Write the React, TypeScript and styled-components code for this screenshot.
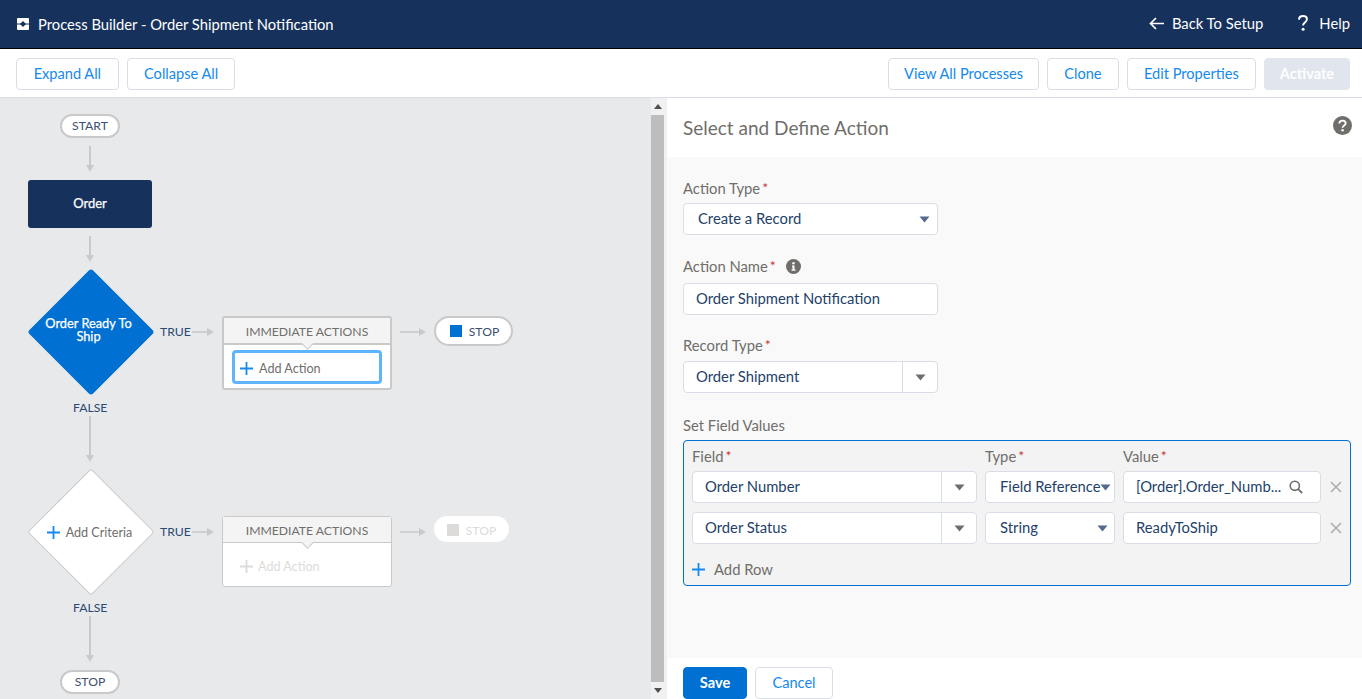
import { ReactNode } from 'react';
import styled, { createGlobalStyle } from 'styled-components';

const FONT = '"Lato", "Open Sans", sans-serif';
const NAVY = '#16325c';
const INK = '#243f69';
const BLUE = '#0070d2';
const LINK = '#1589ee';
const BORDER = '#d8dde6';
const CONNECTOR = '#c9c9c9';

const GlobalStyle = createGlobalStyle`
  html, body {
    margin: 0;
    padding: 0;
    height: 100%;
    overflow: hidden;
    font-family: ${FONT};
    color: ${NAVY};
  }
  * {
    box-sizing: border-box;
  }
`;

const Page = styled.div`
  width: 1362px;
  height: 699px;
  display: flex;
  flex-flow: column;
  overflow: hidden;
`;

const Header = styled.header`
  flex: 0 0 49px;
  display: flex;
  align-items: center;
  justify-content: space-between;
  padding: 0 12px 0 17px;
  background: ${NAVY};
  border-bottom: 1px solid #000;
  color: #fff;
`;

const HeaderGroup = styled.div`
  display: flex;
  align-items: center;
`;

const HeaderTitle = styled.span`
  margin-left: 9px;
  font-size: 14.75px;
`;

const HeaderLink = styled.span<{ $gap: number }>`
  display: flex;
  align-items: center;
  gap: ${(p) => p.$gap}px;
  margin-left: 35px;
  padding-bottom: 2px;
  font-size: 14.8px;
`;

const Toolbar = styled.div`
  flex: 0 0 49px;
  display: flex;
  justify-content: space-between;
  padding: 9px 12px 0 16px;
  background: #fff;
  border-bottom: 1px solid ${BORDER};
`;

const ButtonGroup = styled.div`
  display: flex;
  gap: 8.3px;
`;

const Button = styled.button<{ $width: number; $variant?: 'brand' | 'disabled' }>`
  width: ${(p) => p.$width}px;
  height: 32px;
  padding: 0 0 2px;
  border-radius: 4px;
  font-family: ${FONT};
  font-size: 14.6px;
  border: 1px solid
    ${(p) =>
      p.$variant === 'brand' ? BLUE : p.$variant === 'disabled' ? '#e0e5ee' : BORDER};
  background: ${(p) =>
    p.$variant === 'brand' ? BLUE : p.$variant === 'disabled' ? '#e0e5ee' : '#fff'};
  color: ${(p) => (p.$variant ? '#fff' : LINK)};
  font-weight: ${(p) => (p.$variant ? 700 : 400)};
`;

const Workspace = styled.div`
  flex: 1;
  min-height: 0;
  display: flex;
`;

const Canvas = styled.div`
  position: relative;
  flex: 0 0 651px;
  background: #e8e9eb;
`;

const ScrollTrack = styled.div`
  flex: 0 0 16px;
  display: flex;
  flex-flow: column;
  align-items: stretch;
  background: #f1f1f1;
  padding-right: 3px;
`;

const ScrollArrow = styled.div`
  flex: 0 0 17px;
  display: flex;
  align-items: center;
  justify-content: center;
  color: #505050;
`;

const ScrollThumb = styled.div`
  flex: 1;
  background: #bdbdbd;
`;

const Panel = styled.section`
  flex: 1;
  display: flex;
  flex-flow: column;
  min-width: 0;
`;

const PanelHead = styled.div`
  flex: 0 0 59px;
  display: flex;
  align-items: center;
  justify-content: space-between;
  padding: 0 10px 0 16px;
  background: #fff;
`;

const PanelTitle = styled.h2`
  margin: 0 0 1px;
  font-size: 19px;
  font-weight: 400;
  color: #706e6b;
`;

const HelpSpot = styled.span`
  display: flex;
  margin-bottom: 5px;
`;

const PanelBody = styled.div`
  flex: 1;
  min-height: 0;
  display: flex;
  flex-flow: column;
  padding: 22px 11px 0 16px;
  background: #f9f9f9;
`;

const PanelFooter = styled.div`
  flex: 0 0 41px;
  display: flex;
  gap: 8px;
  padding: 9px 0 0 16px;
  background: #fff;
`;

const FormField = styled.div<{ $gap?: number }>`
  display: flex;
  flex-flow: column;
  margin-bottom: ${(p) => p.$gap ?? 0}px;
`;

const Label = styled.label<{ $below?: number }>`
  display: flex;
  align-items: center;
  height: 18px;
  margin-bottom: ${(p) => p.$below ?? 0}px;
  font-size: 14.8px;
  color: #706e6b;
`;

const Required = styled.span`
  color: #c23934;
  margin-left: 2px;
  font-size: 14px;
  line-height: 18px;
`;

const InfoDot = styled.span`
  display: flex;
  margin-left: 10px;
`;

const Control = styled.div<{ $width?: number }>`
  width: ${(p) => (p.$width ? `${p.$width}px` : 'auto')};
  height: 32px;
  display: flex;
  align-items: center;
  background: #fff;
  border: 1px solid ${BORDER};
  border-radius: 4px;
  font-size: 14.8px;
  color: ${INK};
  white-space: nowrap;
`;

const ControlText = styled.span<{ $indent?: number }>`
  flex: 1;
  min-width: 0;
  padding-left: ${(p) => p.$indent ?? 12}px;
  padding-bottom: 2px;
`;

const ComboArrow = styled.span`
  flex: 0 0 35px;
  height: 100%;
  display: flex;
  align-items: center;
  justify-content: center;
  border-left: 1px solid ${BORDER};
  color: #706e6b;
`;

const SelectArrow = styled.span<{ $right: number }>`
  display: flex;
  margin-right: ${(p) => p.$right}px;
  color: #54698d;
`;

const FieldBox = styled.div`
  height: 146px;
  display: flex;
  flex-flow: column;
  padding: 6px 0 0 8px;
  background: #f3f3f3;
  border: 1px solid ${BLUE};
  border-radius: 4px;
`;

const FieldGrid = styled.div`
  display: grid;
  grid-template-columns: 285px 130px 198px 29px;
  grid-template-rows: 15px 32px 32px;
  column-gap: 8px;
  row-gap: 9px;
  align-items: center;
`;

const GridLabel = styled(Label)`
  align-self: start;
`;

const RemoveButton = styled.span`
  display: flex;
  margin-left: 1px;
  color: #b0adab;
`;

const AddRow = styled.div`
  display: flex;
  align-items: center;
  gap: 9px;
  margin-top: 16px;
  font-size: 14.8px;
  color: #706e6b;
`;

const Pill = styled.div<{ $x: number; $y: number; $w: number; $h: number }>`
  position: absolute;
  left: ${(p) => p.$x}px;
  top: ${(p) => p.$y}px;
  width: ${(p) => p.$w}px;
  height: ${(p) => p.$h}px;
  display: flex;
  align-items: center;
  justify-content: center;
  padding-bottom: 1px;
  background: #fff;
  border: 2px solid ${CONNECTOR};
  border-radius: 16px;
  font-size: 12.2px;
  color: #3c4f6f;
`;

const StopPill = styled(Pill)`
  gap: 7px;
  padding: 0 0 0 2px;
`;

const FadedPill = styled(Pill)`
  border: 0;
  gap: 7px;
  padding: 2px 0 0;
  color: #dddbda;
`;

const StopSquare = styled.span<{ $muted?: boolean }>`
  width: 12px;
  height: 12px;
  background: ${(p) => (p.$muted ? '#dddbda' : BLUE)};
`;

const StartNode = styled.div`
  position: absolute;
  left: 28px;
  top: 82px;
  width: 124px;
  height: 48px;
  display: flex;
  align-items: center;
  justify-content: center;
  padding-bottom: 2px;
  background: ${NAVY};
  border-radius: 3px;
  color: #fff;
  font-size: 13px;
  -webkit-text-stroke: 0.25px #fff;
`;

const Diamond = styled.div<{ $y: number; $active?: boolean }>`
  position: absolute;
  left: 28px;
  top: ${(p) => p.$y}px;
  width: 124px;
  height: 126px;
  display: flex;
  align-items: center;
  justify-content: center;
  &::before {
    content: '';
    position: absolute;
    left: 18px;
    top: 19px;
    width: 88px;
    height: 88px;
    transform: rotate(45deg);
    border-radius: 3px;
    background: ${(p) => (p.$active ? BLUE : '#fff')};
    border: 1px solid ${(p) => (p.$active ? BLUE : CONNECTOR)};
  }
`;

const DiamondText = styled.div`
  position: relative;
  width: 96px;
  margin: -2px 0 0 -3px;
  text-align: center;
  color: #fff;
  font-size: 12.8px;
  line-height: 13px;
  -webkit-text-stroke: 0.25px #fff;
`;

const DiamondAdd = styled.div`
  position: relative;
  display: flex;
  align-items: center;
  gap: 6px;
  margin: 2px 0 0 -1px;
  color: #706e6b;
  font-size: 12.6px;
`;

const BranchLabel = styled.span<{ $x: number; $y: number }>`
  position: absolute;
  left: ${(p) => p.$x}px;
  top: ${(p) => p.$y}px;
  font-size: 12.2px;
  line-height: 14px;
  color: #2a4a75;
`;

const ConnectorArt = styled.svg<{ $x: number; $y: number }>`
  position: absolute;
  left: ${(p) => p.$x}px;
  top: ${(p) => p.$y}px;
  display: block;
`;

const ActionBox = styled.div<{ $y: number; $h: number; $active?: boolean }>`
  position: absolute;
  left: 222px;
  top: ${(p) => p.$y}px;
  width: 170px;
  height: ${(p) => p.$h}px;
  display: flex;
  flex-flow: column;
  background: #fff;
  border: ${(p) => (p.$active ? 2 : 1)}px solid ${CONNECTOR};
  border-radius: 3px;
`;

const ActionHead = styled.div<{ $active?: boolean }>`
  position: relative;
  flex: 0 0 ${(p) => (p.$active ? 27 : 26)}px;
  display: flex;
  align-items: center;
  justify-content: center;
  padding-top: 1px;
  background: #f4f4f4;
  border-bottom: ${(p) => (p.$active ? 2 : 1)}px solid ${CONNECTOR};
  font-size: 12.2px;
  color: #706e6b;
  &::after {
    content: '';
    position: absolute;
    left: 50%;
    bottom: -5px;
    width: 8px;
    height: 8px;
    margin-left: -4px;
    transform: rotate(45deg);
    background: #f4f4f4;
    border-right: 1px solid ${CONNECTOR};
    border-bottom: 1px solid ${CONNECTOR};
  }
`;

const ActionButton = styled.div`
  height: 34px;
  margin: 5px 8px 0;
  display: flex;
  align-items: center;
  gap: 6px;
  padding: 2px 0 0 5px;
  background: #fff;
  border: 3px solid #5eb4ff;
  border-radius: 4px;
  font-size: 12.6px;
  color: #706e6b;
`;

const ActionPlaceholder = styled.div`
  display: flex;
  align-items: center;
  gap: 5px;
  padding: 16px 0 0 17px;
  font-size: 12.6px;
  color: #dddbda;
`;

const Plus = ({ size = 13, color = LINK }: { size?: number; color?: string }) => (
  <svg width={size} height={size} viewBox="0 0 13 13">
    <path d="M6.5 0v13M0 6.5h13" stroke={color} strokeWidth="1.8" fill="none" />
  </svg>
);

const Caret = () => (
  <svg width="11" height="7" viewBox="0 0 11 7">
    <path d="M0.5 0.5h10L5.5 6.5z" fill="currentColor" />
  </svg>
);

const Cross = () => (
  <svg width="12" height="12" viewBox="0 0 12 12">
    <path d="M1 1l10 10M11 1L1 11" stroke="currentColor" strokeWidth="1.6" fill="none" />
  </svg>
);

const DownArrow = ({ x, y, length }: { x: number; y: number; length: number }) => (
  <ConnectorArt $x={x} $y={y} width="12" height={length} viewBox={`0 0 12 ${length}`}>
    <path d={`M6 0V${length - 6}`} stroke={CONNECTOR} strokeWidth="2" />
    <path d={`M2 ${length - 7}h8l-4 7z`} fill={CONNECTOR} />
  </ConnectorArt>
);

const RightArrow = ({ x, y, length }: { x: number; y: number; length: number }) => (
  <ConnectorArt $x={x} $y={y} width={length} height="12" viewBox={`0 0 ${length} 12`}>
    <path d={`M0 6H${length - 6}`} stroke={CONNECTOR} strokeWidth="1.6" />
    <path d={`M${length - 7} 2v8l7-4z`} fill={CONNECTOR} />
  </ConnectorArt>
);

const ProcessLogo = () => (
  <svg width="12" height="12" viewBox="0 0 12 12">
    <rect width="12" height="12" rx="1" fill="#fff" />
    <path d="M0 6h12" stroke={NAVY} strokeWidth="1" />
    <path d="M6 3 9 6 6 9 3 6z" fill={NAVY} />
  </svg>
);

const BackArrow = () => (
  <svg width="15" height="13" viewBox="0 0 15 13">
    <path d="M7 1 1.5 6.5 7 12M2 6.5h13" stroke="#fff" strokeWidth="1.7" fill="none" />
  </svg>
);

const HelpGlyph = () => (
  <svg width="10" height="16" viewBox="0 0 10 16">
    <path
      d="M1 4.600C1.100 2.300 2.700 1.100 5 1.100c2.400 0 3.900 1.300 3.900 3.200 0 1.600-.9 2.400-2 3.200C5.700 8.400 5.100 9 5.100 10.500"
      stroke="#fff"
      strokeWidth="2"
      fill="none"
    />
    <circle cx="5.100" cy="14.300" r="1.500" fill="#fff" />
  </svg>
);

const HelpCircle = () => (
  <svg width="19" height="19" viewBox="0 0 19 19">
    <circle cx="9.500" cy="9.500" r="9.500" fill="#706e6b" />
    <path
      d="M6.300 7.500c.1-1.900 1.400-2.900 3.200-2.900s3.200 1 3.200 2.600c0 2.300-3.100 2.300-3.100 4.500"
      stroke="#fff"
      strokeWidth="1.900"
      fill="none"
    />
    <circle cx="9.600" cy="14.300" r="1.200" fill="#fff" />
  </svg>
);

const InfoCircle = () => (
  <svg width="15" height="15" viewBox="0 0 15 15">
    <circle cx="7.500" cy="7.500" r="7.500" fill="#706e6b" />
    <circle cx="7.500" cy="4.300" r="1.200" fill="#fff" />
    <path d="M6 6.500h2.500v4h1v1.200h-4v-1.200h1v-2.800H6z" fill="#fff" />
  </svg>
);

const SearchGlyph = () => (
  <svg width="14" height="14" viewBox="0 0 14 14">
    <circle cx="5.800" cy="5.800" r="4.600" stroke="#706e6b" strokeWidth="1.600" fill="none" />
    <path d="M9.200 9.200l4 4" stroke="#706e6b" strokeWidth="1.900" />
  </svg>
);

const Field = ({
  label,
  children,
  gap,
  below,
  info,
}: {
  label: string;
  children: ReactNode;
  gap: number;
  below: number;
  info?: boolean;
}) => (
  <FormField $gap={gap}>
    <Label $below={below}>
      {label}
      <Required>*</Required>
      {info && (
        <InfoDot>
          <InfoCircle />
        </InfoDot>
      )}
    </Label>
    {children}
  </FormField>
);

const Combo = ({ value, width }: { value: string; width?: number }) => (
  <Control $width={width}>
    <ControlText>{value}</ControlText>
    <ComboArrow>
      <Caret />
    </ComboArrow>
  </Control>
);

const App = () => (
  <Page>
    <GlobalStyle />
    <Header>
      <HeaderGroup>
        <ProcessLogo />
        <HeaderTitle>Process Builder - Order Shipment Notification</HeaderTitle>
      </HeaderGroup>
      <HeaderGroup>
        <HeaderLink $gap={8}>
          <BackArrow />
          Back To Setup
        </HeaderLink>
        <HeaderLink $gap={11}>
          <HelpGlyph />
          Help
        </HeaderLink>
      </HeaderGroup>
    </Header>
    <Toolbar>
      <ButtonGroup>
        <Button $width={102.7}>Expand All</Button>
        <Button $width={108.3}>Collapse All</Button>
      </ButtonGroup>
      <ButtonGroup>
        <Button $width={150.4}>View All Processes</Button>
        <Button $width={71.7}>Clone</Button>
        <Button $width={128.7}>Edit Properties</Button>
        <Button $width={86} $variant="disabled">
          Activate
        </Button>
      </ButtonGroup>
    </Toolbar>
    <Workspace>
      <Canvas>
        <Pill $x={60} $y={16} $w={60} $h={24}>
          START
        </Pill>
        <DownArrow x={84} y={48} length={26} />
        <StartNode>Order</StartNode>
        <DownArrow x={84} y={138} length={26} />
        <Diamond $y={170} $active>
          <DiamondText>Order Ready To Ship</DiamondText>
        </Diamond>
        <BranchLabel $x={160} $y={227}>
          TRUE
        </BranchLabel>
        <RightArrow x={192} y={228} length={22} />
        <ActionBox $y={218} $h={74} $active>
          <ActionHead $active>IMMEDIATE ACTIONS</ActionHead>
          <ActionButton>
            <Plus />
            Add Action
          </ActionButton>
        </ActionBox>
        <RightArrow x={400} y={228} length={26} />
        <StopPill $x={434} $y={218} $w={79} $h={30}>
          <StopSquare />
          STOP
        </StopPill>
        <BranchLabel $x={73} $y={303}>
          FALSE
        </BranchLabel>
        <DownArrow x={84} y={318} length={46} />
        <Diamond $y={370}>
          <DiamondAdd>
            <Plus />
            Add Criteria
          </DiamondAdd>
        </Diamond>
        <BranchLabel $x={160} $y={427}>
          TRUE
        </BranchLabel>
        <RightArrow x={192} y={428} length={22} />
        <ActionBox $y={418} $h={71}>
          <ActionHead>IMMEDIATE ACTIONS</ActionHead>
          <ActionPlaceholder>
            <Plus color="#dddbda" />
            Add Action
          </ActionPlaceholder>
        </ActionBox>
        <RightArrow x={400} y={428} length={26} />
        <FadedPill $x={434} $y={418} $w={75} $h={26}>
          <StopSquare $muted />
          STOP
        </FadedPill>
        <BranchLabel $x={73} $y={503}>
          FALSE
        </BranchLabel>
        <DownArrow x={84} y={518} length={46} />
        <Pill $x={60} $y={572} $w={60} $h={24}>
          STOP
        </Pill>
      </Canvas>
      <ScrollTrack>
        <ScrollArrow>
          <svg width="8" height="5" viewBox="0 0 8 5">
            <path d="M0 5h8L4 0z" fill="currentColor" />
          </svg>
        </ScrollArrow>
        <ScrollThumb />
        <ScrollArrow>
          <svg width="8" height="5" viewBox="0 0 8 5">
            <path d="M0 0h8L4 5z" fill="currentColor" />
          </svg>
        </ScrollArrow>
      </ScrollTrack>
      <Panel>
        <PanelHead>
          <PanelTitle>Select and Define Action</PanelTitle>
          <HelpSpot>
            <HelpCircle />
          </HelpSpot>
        </PanelHead>
        <PanelBody>
          <Field label="Action Type" below={6} gap={22}>
            <Control $width={255}>
              <ControlText $indent={14}>Create a Record</ControlText>
              <SelectArrow $right={7}>
                <Caret />
              </SelectArrow>
            </Control>
          </Field>
          <Field label="Action Name" below={8} gap={21} info>
            <Control $width={255}>
              <ControlText>Order Shipment Notification</ControlText>
            </Control>
          </Field>
          <Field label="Record Type" below={7} gap={23}>
            <Combo value="Order Shipment" width={255} />
          </Field>
          <FormField>
            <Label $below={6}>Set Field Values</Label>
            <FieldBox>
              <FieldGrid>
                <GridLabel>
                  Field<Required>*</Required>
                </GridLabel>
                <GridLabel>
                  Type<Required>*</Required>
                </GridLabel>
                <GridLabel>
                  Value<Required>*</Required>
                </GridLabel>
                <span />
                <Combo value="Order Number" />
                <Control>
                  <ControlText $indent={14}>Field Reference</ControlText>
                  <SelectArrow $right={3}>
                    <Caret />
                  </SelectArrow>
                </Control>
                <Control>
                  <ControlText>[Order].Order_Numb...</ControlText>
                  <SelectArrow $right={17}>
                    <SearchGlyph />
                  </SelectArrow>
                </Control>
                <RemoveButton>
                  <Cross />
                </RemoveButton>
                <Combo value="Order Status" />
                <Control>
                  <ControlText $indent={14}>String</ControlText>
                  <SelectArrow $right={6}>
                    <Caret />
                  </SelectArrow>
                </Control>
                <Control>
                  <ControlText>ReadyToShip</ControlText>
                </Control>
                <RemoveButton>
                  <Cross />
                </RemoveButton>
              </FieldGrid>
              <AddRow>
                <Plus />
                Add Row
              </AddRow>
            </FieldBox>
          </FormField>
        </PanelBody>
        <PanelFooter>
          <Button $width={64} $variant="brand">
            Save
          </Button>
          <Button $width={78}>Cancel</Button>
        </PanelFooter>
      </Panel>
    </Workspace>
  </Page>
);

export default App;
